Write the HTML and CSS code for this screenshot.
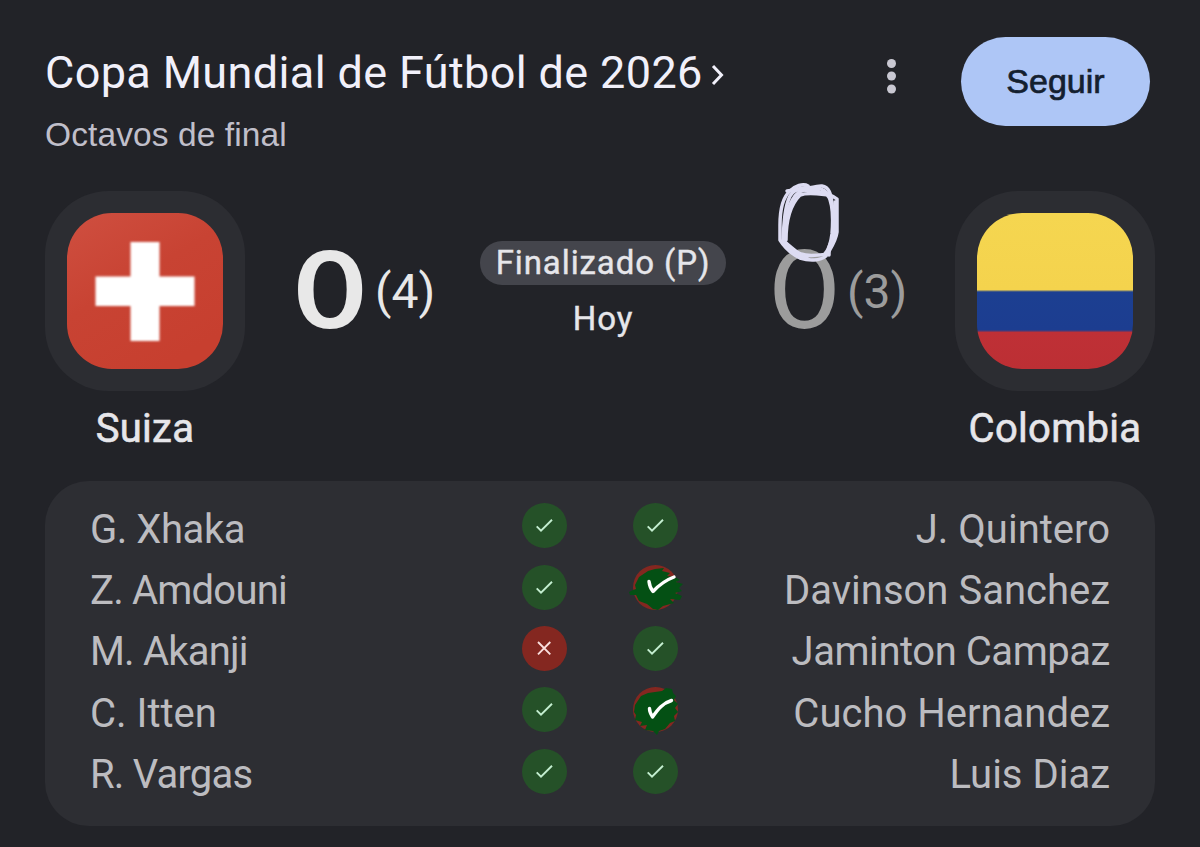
FILE: index.html
```html
<!DOCTYPE html>
<html lang="es">
<head>
  <meta charset="UTF-8" />
  <meta name="viewport" content="width=device-width, initial-scale=1.0"/>
  <title>Suiza - Colombia</title>

  <link rel="stylesheet" href="styles.css">
</head>
<body>

  <svg class="symbols" width="0" height="0">
    <symbol id="check" viewBox="0 0 45 45">
      <path d="M14.7 23.300 L19 27.600 L30 16.800" fill="none" stroke="#c4eed0" stroke-width="1.9"/>
    </symbol>
    <symbol id="cross" viewBox="0 0 45 45">
      <path d="M16 16 L28.300 28.300 M28.300 16 L16 28.300" fill="none" stroke="#f9dedc" stroke-width="1.9"/>
    </symbol>
  </svg>

  <header>
    <div class="heading">
      <h1><span class="title">Copa Mundial de Fútbol de 2026</span>
        <svg class="chevron" width="14" height="24" viewBox="0 0 14 24"><path d="M2 3 L10.5 12 L2 21" fill="none" stroke="#f1f0fa" stroke-width="3"/></svg>
      </h1>
      <p>Octavos de final</p>
    </div>
    <svg class="more" width="10" height="36" viewBox="0 0 10 36" fill="#c9c8d2">
      <circle cx="4.5" cy="5.500" r="4.5"/><circle cx="4.5" cy="18" r="4.5"/><circle cx="4.5" cy="31" r="4.5"/>
    </svg>
    <button>Seguir</button>
  </header>

  <section class="match">
    <div class="team">
      <div class="badge">
        <svg class="flag" viewBox="0 0 156 156">
          <defs>
            <linearGradient id="red" x1="0" y1="0" x2="0.6" y2="1">
              <stop offset="0" stop-color="#cf4f40"/><stop offset="0.5" stop-color="#c84333"/><stop offset="1" stop-color="#c73f2f"/>
            </linearGradient>
            <filter id="soft"><feGaussianBlur stdDeviation="1.2"/></filter>
          </defs>
          <rect width="156" height="156" fill="url(#red)"/>
          <path d="M63.500 29 H92.500 V63.500 H127.500 V93 H92.500 V128 H63.500 V93 H28.500 V63.500 H63.500 Z" fill="#fff" filter="url(#soft)"/>
        </svg>
      </div>
      <div class="name">Suiza</div>
    </div>

    <div class="score home"><span class="goals">0</span><span class="pens">(4)</span></div>

    <div class="status">
      <span class="pill">Finalizado (P)</span>
      <span class="day">Hoy</span>
    </div>

    <div class="score away">
      <span class="goals">0</span><span class="pens">(3)</span>
      <!-- hand drawn goal -->
      <svg class="scribble" width="70" height="86" viewBox="0 0 70 86" fill="none" stroke="#dddcf2" stroke-width="3.500" stroke-linecap="round" stroke-linejoin="round">
        <path d="M33 4 C28 1 20 4 15 9 C7 16 5 30 5 43 L5 58 C10 66 17 72 25 76 C34 79 45 79 51 74"/>
        <path d="M33 6 C25 5 19 8 15 14 C10 24 9 40 8 58 L15 66"/>
        <path d="M12 9 C22 7 31 8 41 9 C50 11 57 13 62 17 L62 50 C61 58 57 64 53 71"/>
        <path d="M9 57 C9 40 12 25 20 14 C27 6 38 5 47 4 C54 5 56 12 57 22 C60 35 60 52 54 65 L54 73"/>
        <path d="M11 58 C11 40 15 23 25 13 C33 10 44 12 53 13 C58 22 58 40 57 52 C56 61 54 68 49 73"/>
        <path d="M8 59 C16 64 19 69 26 72 C34 75 45 73 53 72 M53 14 C51 8 45 5 36 7"/>
        <path d="M13 65 C18 70 24 74 32 76 M60 20 L60 49 L56 62"/>
      </svg>
    </div>

    <div class="team">
      <div class="badge">
        <svg class="flag" viewBox="0 0 156 156">
          <defs>
            <linearGradient id="co" x1="0" y1="0" x2="0" y2="1">
              <stop offset="0" stop-color="#f5d650"/><stop offset="0.492" stop-color="#f4d34d"/>
              <stop offset="0.506" stop-color="#1c3f91"/><stop offset="0.75" stop-color="#1c3d90"/>
              <stop offset="0.766" stop-color="#bf3036"/><stop offset="1" stop-color="#bc2f34"/>
            </linearGradient>
          </defs>
          <rect width="156" height="156" fill="url(#co)"/>
        </svg>
      </div>
      <div class="name">Colombia</div>
    </div>
  </section>

  <section class="shootout">
    <div class="row">
      <span class="player snug">G. Xhaka</span>
      <svg class="dot goal"><use href="#check"/></svg>
      <svg class="dot goal"><use href="#check"/></svg>
      <span class="player right">J. Quintero</span>
    </div>
    <div class="row">
      <span class="player tight">Z. Amdouni</span>
      <svg class="dot goal"><use href="#check"/></svg>
      <svg class="painted" viewBox="0 0 45 45">
        <circle cx="22.5" cy="22.5" r="22.5" fill="#842720"/>
        <path d="M2 20 L6 12 L15 6 L22 4 L31 3 L29 6 L37 8 L34 11 L42 12 L47 15 L43 17 L50 19 L46 23 L49 26 L42 28 L49 31 L47 35 L37 34 L41 38 L30 41 L25 45 L20 44 L14 39 L6 36 L3 30 L-3 30 L-4 27 L0 25 L3 24 Z" fill="#045014"/>
        <path d="M16 16.500 C16.500 21 18 24 20 26.500 C26 20 33 15 41 12" fill="none" stroke="#fff" stroke-width="3.4" stroke-linecap="round" stroke-linejoin="round"/>
      </svg>
      <span class="player right">Davinson Sanchez</span>
    </div>
    <div class="row">
      <span class="player tight">M. Akanji</span>
      <svg class="dot miss"><use href="#cross"/></svg>
      <svg class="dot goal"><use href="#check"/></svg>
      <span class="player right snug">Jaminton Campaz</span>
    </div>
    <div class="row">
      <span class="player">C. Itten</span>
      <svg class="dot goal"><use href="#check"/></svg>
      <svg class="painted" viewBox="0 0 45 45">
        <circle cx="22.5" cy="22.5" r="22.5" fill="#842720"/>
        <path d="M2 18 L8 9 L15 6 L29 4 L33 1 L39 2 L40 6 L43 9 L41 13 L45 17 L42 21 L45 25 L41 29 L42 34 L37 36 L32 42 L26 44 L24 48 L20 44 L12 43 L14 38 L7 39 L9 35 L2 33 L3 28 L1 25 Z" fill="#045014"/>
        <path d="M16.500 21.500 C16.500 25 18 27.500 19.500 30 C25 22 30 16 38.500 13.500" fill="none" stroke="#fff" stroke-width="3.4" stroke-linecap="round" stroke-linejoin="round"/>
      </svg>
      <span class="player right">Cucho Hernandez</span>
    </div>
    <div class="row">
      <span class="player tight">R. Vargas</span>
      <svg class="dot goal"><use href="#check"/></svg>
      <svg class="dot goal"><use href="#check"/></svg>
      <span class="player right">Luis Diaz</span>
    </div>
  </section>

</body>
</html>
```
FILE: styles.css
```css
* {
  box-sizing: border-box;
}

body {
  margin: 0;
  padding: 37px 45px 0;
  height: 847px;
  overflow: hidden;
  font-family: Roboto, "Liberation Sans", sans-serif;
  background: #222328;
  color: #e6e6ea;
}

.symbols {
  display: block;
}

header {
  display: flex;
  height: 154px;
  padding-right: 5px;
}

.heading {
  flex: 1;
}

h1 {
  display: flex;
  align-items: center;
  gap: 8px;
  margin: 0;
  height: 70px;
  font-size: 45px;
  font-weight: 400;
  letter-spacing: 0.37px;
  color: #f1f0fa;
}

.title {
  white-space: nowrap;
}

.chevron {
  margin-top: 6px;
}

.heading p {
  margin: 9px 0 0;
  font-family: "Liberation Sans", sans-serif;
  font-size: 33.500px;
  line-height: 38px;
  letter-spacing: 0.1px;
  color: #c0bfca;
}

.more {
  margin: 21px 64px 0 0;
}

button {
  width: 189px;
  height: 89px;
  border: none;
  border-radius: 45px;
  background: #aec6f6;
  color: #14202f;
  font-family: "Liberation Sans", sans-serif;
  font-size: 34px;
  -webkit-text-stroke: 0.7px #14202f;
}

.match {
  display: grid;
  grid-template-columns: 200px 235px 246px 229px 200px;
  height: 290px;
}

.team {
  text-align: center;
}

.badge {
  display: flex;
  align-items: center;
  justify-content: center;
  width: 200px;
  height: 200px;
  border-radius: 64px;
  background: #2c2d32;
}

.flag {
  width: 156px;
  height: 156px;
  border-radius: 45px;
}

.name {
  margin-top: 14px;
  font-size: 40px;
  line-height: 47px;
  letter-spacing: 0.3px;
  -webkit-text-stroke: 0.6px #e6e6ea;
}

.score {
  position: relative;
  display: flex;
  align-items: center;
  height: 200px;
  color: #e8e8e8;
}

.goals {
  width: 80px;
  margin-bottom: 10px;
  font-family: Lato, Roboto, sans-serif;
  font-size: 108px;
  line-height: 1;
  transform: scaleX(1.12);
  transform-origin: 0 50%;
}

.pens {
  font-size: 48px;
}

.home {
  padding-left: 50px;
}

.home .goals {
  font-weight: 700;
}

.away {
  padding-left: 45px;
  color: #9c9c9c;
}

.away .goals {
  width: 76px;
  transform: scaleX(1.07);
}

.scribble {
  position: absolute;
  left: 49px;
  top: -9px;
}

.status {
  display: flex;
  flex-direction: column;
  align-items: center;
  padding-top: 50px;
  font-size: 33px;
  letter-spacing: 0.9px;
  -webkit-text-stroke: 0.4px #e6e6ea;
}

.pill {
  width: 246px;
  height: 44px;
  line-height: 44px;
  border-radius: 22px;
  background: #44454c;
  text-align: center;
}

.day {
  margin-top: 14px;
}

.shootout {
  height: 345px;
  padding: 14px 45px 0;
  border-radius: 44px;
  background: #2d2e33;
}

.row {
  display: grid;
  grid-template-columns: 1fr 45px 45px 1fr;
  column-gap: 66.500px;
  align-items: center;
  height: 61.400px;
  font-size: 40px;
  color: #bcbcc0;
  white-space: nowrap;
}

.player {
  padding-top: 7px;
}

.snug {
  letter-spacing: -0.45px;
}

.tight {
  letter-spacing: -0.8px;
}

.right {
  text-align: right;
}

.dot, .painted {
  width: 45px;
  height: 45px;
}

.dot {
  border-radius: 50%;
}

.painted {
  overflow: visible;
}

.goal {
  background: #255128;
}

.miss {
  background: #842720;
}
```
